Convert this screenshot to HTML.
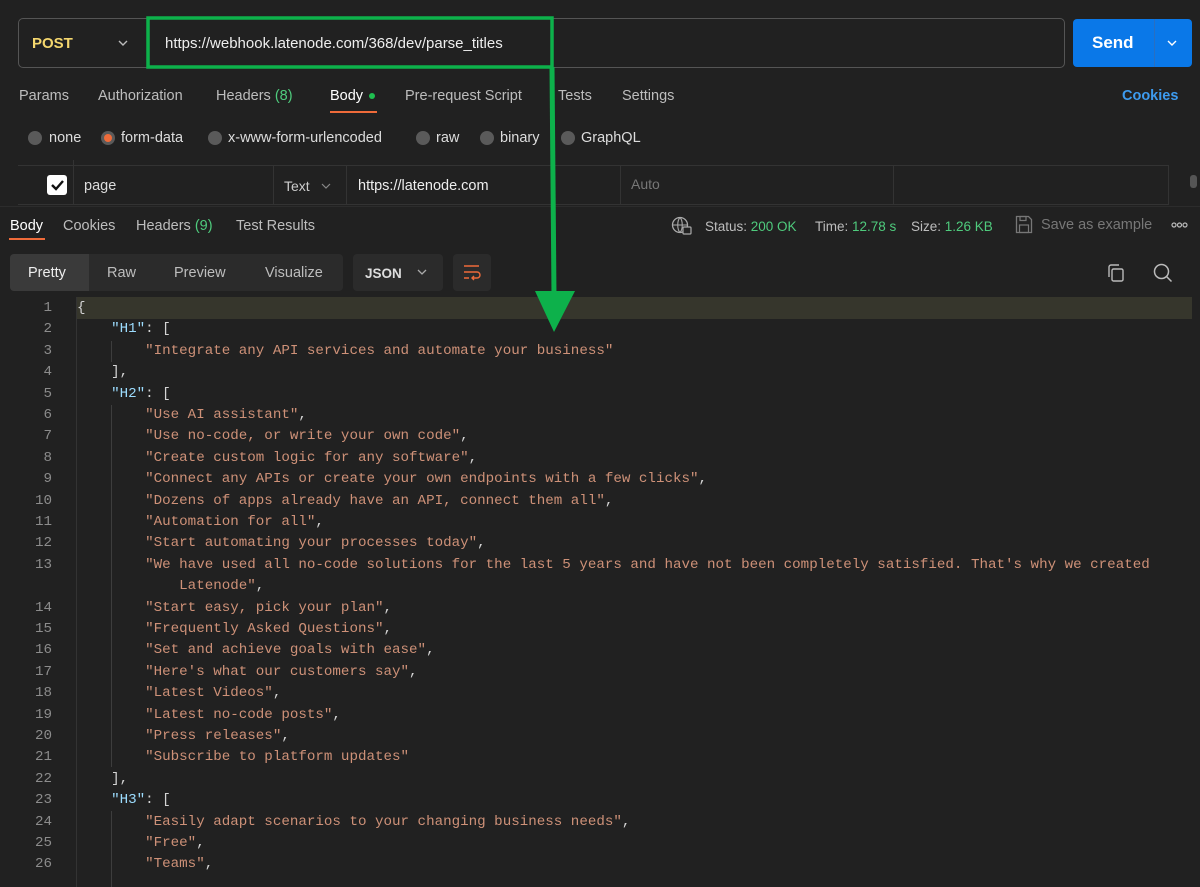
<!DOCTYPE html>
<html><head><meta charset="utf-8"><style>
*{margin:0;padding:0;box-sizing:border-box}
body{width:1200px;height:887px;background:#212121;font-family:"Liberation Sans",sans-serif;font-size:14px;color:#bdbdbd;position:relative;overflow:hidden}
.a{position:absolute;white-space:nowrap}
.g{color:#4fcb7d}
.code{position:absolute;left:0;top:298px;width:1200px;font-family:"Liberation Mono",monospace;font-size:14.2px}
.ln{position:absolute;left:0;width:52px;text-align:right;color:#8c8c8c}
.tx{position:absolute;left:77px;color:#ce9178;white-space:pre}
.k{color:#9cdcfe}.p{color:#d4d4d4}
.guide{position:absolute;width:1px;background:#3d3d3d}
</style></head><body>
<div class="a" style="left:18px;top:18px;width:1047px;height:50px;border:1px solid #555;border-radius:5px"></div>
<div class="a" style="left:32px;top:35px;color:#f5d76e;font-weight:bold;font-size:15px">POST</div>
<svg class="a" style="left:117px;top:38px" width="12" height="10"><path d="M2 3l4 4 4-4" stroke="#bbb" fill="none" stroke-width="1.4"/></svg>
<div class="a" style="left:165px;top:35px;color:#eee;font-size:15px">https://webhook.latenode.com/368/dev/parse_titles</div>
<div class="a" style="left:1073px;top:19px;width:119px;height:48px;background:#0a78e8;border-radius:4px"></div>
<div class="a" style="left:1154px;top:19px;width:1px;height:48px;background:#2a6fc0"></div>
<div class="a" style="left:1092px;top:33px;color:#fff;font-weight:bold;font-size:17px">Send</div>
<svg class="a" style="left:1166px;top:38px" width="12" height="10"><path d="M2 3l4 4 4-4" stroke="#fff" fill="none" stroke-width="1.4"/></svg>
<div class="a" style="left:19px;top:88px;font-size:14.5px">Params</div>
<div class="a" style="left:98px;top:88px;font-size:14.5px">Authorization</div>
<div class="a" style="left:216px;top:88px;font-size:14.5px">Headers <span class="g">(8)</span></div>
<div class="a" style="left:330px;top:88px;font-size:14.5px;color:#fff">Body</div>
<div class="a" style="left:369px;top:93px;width:6px;height:6px;border-radius:50%;background:#1fbf50"></div>
<div class="a" style="left:330px;top:111px;width:47px;height:2px;background:#ef6b3a"></div>
<div class="a" style="left:405px;top:88px;font-size:14.5px">Pre-request Script</div>
<div class="a" style="left:558px;top:88px;font-size:14.5px">Tests</div>
<div class="a" style="left:622px;top:88px;font-size:14.5px">Settings</div>
<div class="a" style="left:1122px;top:88px;font-size:14.5px;color:#3d9bef;font-weight:bold">Cookies</div>
<div class="a" style="left:28px;top:131px;width:14px;height:14px;border-radius:50%;background:#5a5a5a"></div>
<div class="a" style="left:49px;top:130px;font-size:14.5px;color:#ddd">none</div>
<div class="a" style="left:101px;top:131px;width:14px;height:14px;border-radius:50%;background:#5a5a5a"></div>
<div class="a" style="left:104px;top:134px;width:8px;height:8px;border-radius:50%;background:#ef6b3a"></div>
<div class="a" style="left:121px;top:130px;font-size:14.5px;color:#ddd">form-data</div>
<div class="a" style="left:208px;top:131px;width:14px;height:14px;border-radius:50%;background:#5a5a5a"></div>
<div class="a" style="left:228px;top:130px;font-size:14.5px;color:#ddd">x-www-form-urlencoded</div>
<div class="a" style="left:416px;top:131px;width:14px;height:14px;border-radius:50%;background:#5a5a5a"></div>
<div class="a" style="left:436px;top:130px;font-size:14.5px;color:#ddd">raw</div>
<div class="a" style="left:480px;top:131px;width:14px;height:14px;border-radius:50%;background:#5a5a5a"></div>
<div class="a" style="left:500px;top:130px;font-size:14.5px;color:#ddd">binary</div>
<div class="a" style="left:561px;top:131px;width:14px;height:14px;border-radius:50%;background:#5a5a5a"></div>
<div class="a" style="left:581px;top:130px;font-size:14.5px;color:#ddd">GraphQL</div>
<div class="a" style="left:18px;top:165px;width:1150px;height:40px;border-top:1px solid #333;border-bottom:1px solid #333"></div>
<div class="a" style="left:73px;top:160px;width:1px;height:45px;background:#333"></div>
<div class="a" style="left:273px;top:165px;width:1px;height:40px;background:#333"></div>
<div class="a" style="left:346px;top:165px;width:1px;height:40px;background:#333"></div>
<div class="a" style="left:620px;top:165px;width:1px;height:40px;background:#333"></div>
<div class="a" style="left:893px;top:165px;width:1px;height:40px;background:#333"></div>
<div class="a" style="left:1168px;top:165px;width:1px;height:40px;background:#333"></div>
<div class="a" style="left:47px;top:175px;width:20px;height:20px;border-radius:3px;background:#fff"></div>
<svg class="a" style="left:47px;top:175px" width="20" height="20"><path d="M5 10l4 4 7-8" stroke="#111" stroke-width="2.4" fill="none"/></svg>
<div class="a" style="left:84px;top:178px;font-size:14.5px;color:#ddd">page</div>
<div class="a" style="left:284px;top:178px;font-size:14px;color:#ccc">Text</div>
<svg class="a" style="left:320px;top:181px" width="12" height="10"><path d="M2 3l4 4 4-4" stroke="#888" fill="none" stroke-width="1.2"/></svg>
<div class="a" style="left:358px;top:178px;font-size:14.5px;color:#eee">https://latenode.com</div>
<div class="a" style="left:631px;top:176px;font-size:14px;color:#777">Auto</div>
<div class="a" style="left:1190px;top:175px;width:7px;height:13px;border-radius:3px;background:#555"></div>
<div class="a" style="left:0;top:206px;width:1200px;height:1px;background:#2c2c2c"></div>
<div class="a" style="left:10px;top:218px;font-size:14.5px;color:#fff">Body</div>
<div class="a" style="left:9px;top:238px;width:36px;height:2px;background:#ef6b3a"></div>
<div class="a" style="left:63px;top:218px;font-size:14.5px">Cookies</div>
<div class="a" style="left:136px;top:218px;font-size:14.5px">Headers <span class="g">(9)</span></div>
<div class="a" style="left:236px;top:218px;font-size:14.5px">Test Results</div>
<svg class="a" style="left:671px;top:216px" width="22" height="20"><circle cx="9" cy="9" r="7.5" stroke="#aaa" fill="none" stroke-width="1.3"/><path d="M1.5 9h15M9 1.5c-3 3-3 12 0 15M9 1.5c3 3 3 12 0 15" stroke="#aaa" fill="none" stroke-width="1.1"/><rect x="12" y="11" width="8" height="7" rx="1" fill="#212121" stroke="#aaa" stroke-width="1.2"/></svg>
<div class="a" style="left:705px;top:219px;font-size:13.5px">Status: <span class="g">200 OK</span></div>
<div class="a" style="left:815px;top:219px;font-size:13.5px">Time: <span class="g">12.78 s</span></div>
<div class="a" style="left:911px;top:219px;font-size:13.5px">Size: <span class="g">1.26 KB</span></div>
<svg class="a" style="left:1015px;top:215px" width="18" height="19"><path d="M1.5 1.5h12l3 3v13h-15z" stroke="#777" fill="none" stroke-width="1.3"/><rect x="5" y="1.5" width="6" height="4" stroke="#777" fill="none" stroke-width="1.2"/><rect x="4.5" y="10" width="9" height="7.5" stroke="#777" fill="none" stroke-width="1.2"/></svg>
<div class="a" style="left:1041px;top:217px;font-size:14.5px;color:#777">Save as example</div>
<svg class="a" style="left:1171px;top:222px" width="18" height="6"><circle cx="3" cy="3" r="2" stroke="#bbb" fill="none" stroke-width="1.2"/><circle cx="8.5" cy="3" r="2" stroke="#bbb" fill="none" stroke-width="1.2"/><circle cx="14" cy="3" r="2" stroke="#bbb" fill="none" stroke-width="1.2"/></svg>
<div class="a" style="left:10px;top:254px;width:333px;height:37px;background:#2b2b2b;border-radius:4px"></div>
<div class="a" style="left:10px;top:254px;width:79px;height:37px;background:#3a3a3a;border-radius:4px 0 0 4px"></div>
<div class="a" style="left:28px;top:265px;font-size:14.5px;color:#eee">Pretty</div>
<div class="a" style="left:107px;top:265px;font-size:14.5px">Raw</div>
<div class="a" style="left:174px;top:265px;font-size:14.5px">Preview</div>
<div class="a" style="left:265px;top:265px;font-size:14.5px">Visualize</div>
<div class="a" style="left:353px;top:254px;width:90px;height:37px;background:#2b2b2b;border-radius:4px"></div>
<div class="a" style="left:365px;top:266px;font-size:13.5px;color:#ddd;font-weight:bold">JSON</div>
<svg class="a" style="left:416px;top:267px" width="12" height="10"><path d="M2 3l4 4 4-4" stroke="#aaa" fill="none" stroke-width="1.3"/></svg>
<div class="a" style="left:453px;top:254px;width:38px;height:37px;background:#2b2b2b;border-radius:4px"></div>
<svg class="a" style="left:462px;top:263px" width="20" height="20"><path d="M2 3h15M2 9h13a3 3 0 0 1 0 6h-5M12 13l-2 2 2 2M2 15h5" stroke="#ef6b3a" fill="none" stroke-width="1.4"/></svg>
<svg class="a" style="left:1106px;top:263px" width="20" height="20"><rect x="6" y="6" width="11" height="12" rx="1.5" stroke="#bbb" fill="none" stroke-width="1.4"/><path d="M3 14V4a2 2 0 0 1 2-2h8" stroke="#bbb" fill="none" stroke-width="1.4"/></svg>
<svg class="a" style="left:1153px;top:263px" width="20" height="20"><circle cx="8.5" cy="8.5" r="7" stroke="#bbb" fill="none" stroke-width="1.5"/><path d="M13.5 13.5l5 5" stroke="#bbb" stroke-width="1.5"/></svg>
<div class="a" style="left:77px;top:297px;width:1115px;height:22px;background:#36362c"></div>
<div class="guide" style="left:76px;top:297px;height:590px;background:#333"></div>
<div class="guide" style="left:111px;top:341px;height:21px"></div>
<div class="guide" style="left:111px;top:405px;height:362px"></div>
<div class="guide" style="left:111px;top:811px;height:76px"></div>
<div class="code" id="c"></div>
<script>
var L=[
['1','<span class="p">{</span>'],
['2','    <span class="k">"H1"</span><span class="p">: [</span>'],
['3','        "Integrate any API services and automate your business"'],
['4','    <span class="p">],</span>'],
['5','    <span class="k">"H2"</span><span class="p">: [</span>'],
['6','        "Use AI assistant"<span class="p">,</span>'],
['7','        "Use no-code, or write your own code"<span class="p">,</span>'],
['8','        "Create custom logic for any software"<span class="p">,</span>'],
['9','        "Connect any APIs or create your own endpoints with a few clicks"<span class="p">,</span>'],
['10','        "Dozens of apps already have an API, connect them all"<span class="p">,</span>'],
['11','        "Automation for all"<span class="p">,</span>'],
['12','        "Start automating your processes today"<span class="p">,</span>'],
['13','        "We have used all no-code solutions for the last 5 years and have not been completely satisfied. That\'s why we created'],
['','            Latenode"<span class="p">,</span>'],
['14','        "Start easy, pick your plan"<span class="p">,</span>'],
['15','        "Frequently Asked Questions"<span class="p">,</span>'],
['16','        "Set and achieve goals with ease"<span class="p">,</span>'],
['17','        "Here\'s what our customers say"<span class="p">,</span>'],
['18','        "Latest Videos"<span class="p">,</span>'],
['19','        "Latest no-code posts"<span class="p">,</span>'],
['20','        "Press releases"<span class="p">,</span>'],
['21','        "Subscribe to platform updates"'],
['22','    <span class="p">],</span>'],
['23','    <span class="k">"H3"</span><span class="p">: [</span>'],
['24','        "Easily adapt scenarios to your changing business needs"<span class="p">,</span>'],
['25','        "Free"<span class="p">,</span>'],
['26','        "Teams"<span class="p">,</span>']];
var h='';for(var i=0;i<L.length;i++){var t=2+i*21.4;h+='<div class="ln" style="top:'+t+'px">'+L[i][0]+'</div><div class="tx" style="top:'+t+'px">'+L[i][1]+'</div>';}
document.getElementById('c').innerHTML=h;
</script>
<svg class="a" style="left:0;top:0" width="1200" height="887"><rect x="148" y="18" width="404" height="49" fill="none" stroke="#0db14b" stroke-width="3.5"/><path d="M552 67L554 296" stroke="#0db14b" stroke-width="5"/><path d="M535 291L575 291L554 332Z" fill="#0db14b"/></svg>
</body></html>
